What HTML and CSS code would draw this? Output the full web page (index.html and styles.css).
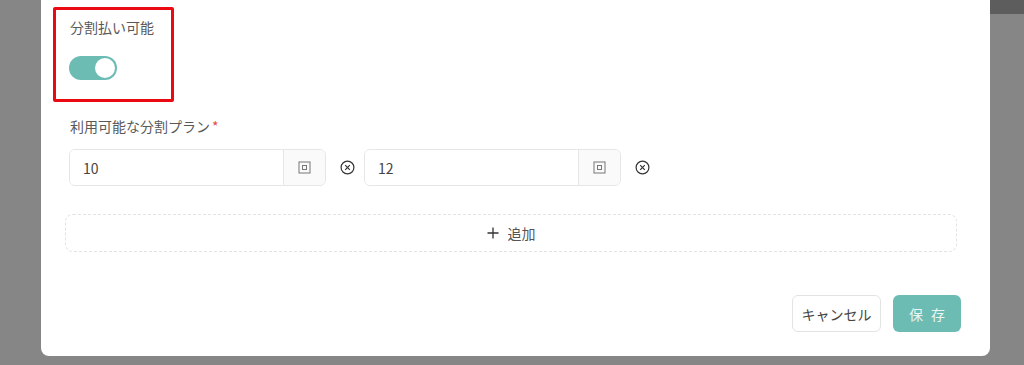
FILE: index.html
```html
<!DOCTYPE html>
<html lang="ja">
<head>
<meta charset="UTF-8">
<meta name="viewport" content="width=device-width, initial-scale=1.0">
<title>分割払い設定</title>
<link rel="stylesheet" href="styles.css">
</head>
<body>
    <div class="backdrop-strip"></div>
    <div class="modal">
        <div class="highlight">
            <p class="field-label">分割払い可能</p>
            <div class="switch switch-on"><span class="switch-knob"></span></div>
        </div>

        <div class="plan-field">
            <p class="field-label plan-label">利用可能な分割プラン<span class="required">*</span></p>
            <div class="plan-row">
                <div class="plan-item">
                    <div class="input-group">
                        <input class="input" type="text" value="10">
                        <span class="addon">
                            <svg width="13" height="13" viewBox="0 0 13 13"><rect x="1" y="1" width="11" height="11" fill="none" stroke="#777" stroke-width="1"/><rect x="4.5" y="4.5" width="4" height="4" fill="none" stroke="#777" stroke-width="1"/></svg>
                        </span>
                    </div>
                    <svg class="remove" width="15" height="15" viewBox="0 0 15 15"><circle cx="7.5" cy="7.5" r="6.4" fill="none" stroke="#333" stroke-width="1.2"/><path d="M5.2 5.2 L9.8 9.8 M9.8 5.2 L5.2 9.8" stroke="#333" stroke-width="1.2"/></svg>
                </div>
                <div class="plan-item">
                    <div class="input-group">
                        <input class="input" type="text" value="12">
                        <span class="addon">
                            <svg width="13" height="13" viewBox="0 0 13 13"><rect x="1" y="1" width="11" height="11" fill="none" stroke="#777" stroke-width="1"/><rect x="4.5" y="4.5" width="4" height="4" fill="none" stroke="#777" stroke-width="1"/></svg>
                        </span>
                    </div>
                    <svg class="remove" width="15" height="15" viewBox="0 0 15 15"><circle cx="7.5" cy="7.5" r="6.4" fill="none" stroke="#333" stroke-width="1.2"/><path d="M5.2 5.2 L9.8 9.8 M9.8 5.2 L5.2 9.8" stroke="#333" stroke-width="1.2"/></svg>
                </div>
            </div>
        </div>

        <button class="add-button">
            <svg width="12" height="12" viewBox="0 0 12 12"><path d="M6 0.5 V11.5 M0.5 6 H11.5" stroke="#333" stroke-width="1.3"/></svg>
            <span>追加</span>
        </button>

        <div class="modal-footer">
            <button class="btn btn-default">キャンセル</button>
            <button class="btn btn-primary">保存</button>
        </div>
    </div>
</body>
</html>
```

FILE: styles.css
```css
body {
    margin: 0;
    background-color: #868686;
    font-family: "Noto Sans CJK JP", "Noto Sans", sans-serif;
    color: #555;
    height: 365px;
    overflow: hidden;
}
.backdrop-strip {
    position: absolute;
    top: 0;
    left: 990px;
    width: 34px;
    height: 14px;
    background-color: #5d5d5d;
}
.modal {
    margin-left: 41px;
    width: 949px;
    height: 356px;
    box-sizing: border-box;
    background-color: #fff;
    border-radius: 0 0 8px 8px;
    padding: 7px 29px 0 24px;
    display: flex;
    flex-direction: column;
}
.highlight {
    align-self: flex-start;
    width: 121px;
    box-sizing: border-box;
    margin-left: -12px;
    border: 3px solid #ec0a12;
    border-radius: 2px;
    padding: 6px 0 19px 14px;
}
.field-label {
    margin: 0;
    font-size: 14px;
    line-height: 22px;
    color: #595959;
}
.switch {
    margin-top: 18px;
    margin-left: -1px;
    width: 48px;
    height: 24px;
    border-radius: 12px;
    background-color: #6cbcb3;
    position: relative;
}
.switch-knob {
    position: absolute;
    top: 2px;
    right: 2px;
    width: 20px;
    height: 20px;
    border-radius: 50%;
    background-color: #fff;
}
.plan-field {
    margin-top: 13px;
    padding-left: 4px;
}
.plan-label {
    margin-left: 1px;
}
.required {
    color: #e5484d;
    margin-left: 2px;
}
.plan-row {
    display: flex;
    gap: 9px;
    margin-top: 12px;
}
.plan-item {
    display: flex;
    align-items: center;
}
.input-group {
    display: flex;
    width: 257px;
    height: 37px;
    box-sizing: border-box;
    border: 1px solid #e6e6e6;
    border-radius: 6px;
    overflow: hidden;
}
.input {
    flex: 1;
    min-width: 0;
    border: none;
    outline: none;
    padding: 0 13px;
    font-family: inherit;
    font-size: 14px;
    color: #444;
}
.addon {
    width: 41px;
    display: flex;
    align-items: center;
    justify-content: center;
    background-color: #fafafa;
    border-left: 1px solid #e6e6e6;
}
.remove {
    margin-left: 14px;
}
.add-button {
    margin-top: 28px;
    width: 892px;
    height: 38px;
    border: 1px dashed #e3e3e3;
    border-radius: 8px;
    background-color: #fff;
    display: flex;
    align-items: center;
    justify-content: center;
    gap: 9px;
    font-family: inherit;
    font-size: 14px;
    color: #555;
}
.modal-footer {
    margin-top: 43px;
    display: flex;
    justify-content: flex-end;
    gap: 12px;
}
.btn {
    height: 37px;
    border-radius: 6px;
    font-family: inherit;
    font-size: 14px;
}
.btn-default {
    width: 89px;
    border: 1px solid #e3e3e3;
    background-color: #fff;
    color: #444;
}
.btn-primary {
    width: 68px;
    border: none;
    background-color: #6cbcb3;
    color: #e9f6f4;
    letter-spacing: 8px;
    text-indent: 8px;
}
```
